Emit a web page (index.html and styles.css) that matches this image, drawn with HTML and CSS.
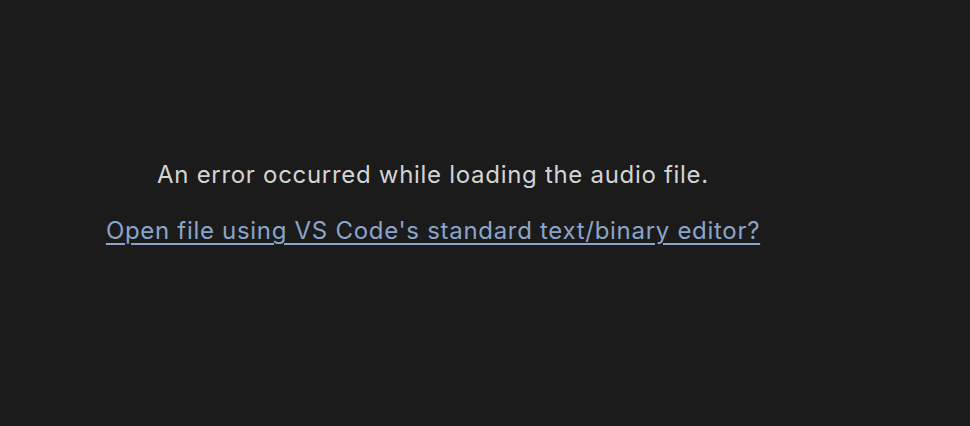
FILE: index.html
```html
<!DOCTYPE html>
<html>
<head>
<meta charset="utf-8">
<link rel="stylesheet" href="styles.css">
</head>
<body>
<div class="page">
  <div class="message">
    <p class="error">An error occurred while loading the audio file.</p>
    <a class="open-link" href="#">Open file using VS Code's standard text/binary editor?</a>
  </div>
</div>
</body>
</html>
```
FILE: styles.css
```css
html, body {
  margin: 0;
  padding: 0;
  background: #1b1b1b;
  height: 100%;
}
.page {
  width: 866px;
  height: 426px;
  display: flex;
  justify-content: center;
  padding-top: 157px;
  box-sizing: border-box;
  font-family: Inter, "Noto Sans", sans-serif;
  font-size: 24px;
  letter-spacing: 0.7px;
}
.message {
  display: flex;
  flex-direction: column;
  align-items: center;
}
.error {
  margin: 0;
  color: #d4d4d4;
  line-height: 36px;
}
.open-link {
  margin-top: 20px;
  color: #8aa5c9;
  line-height: 36px;
  text-decoration: underline;
  text-decoration-thickness: 2px;
  text-underline-offset: 4px;
}
```
